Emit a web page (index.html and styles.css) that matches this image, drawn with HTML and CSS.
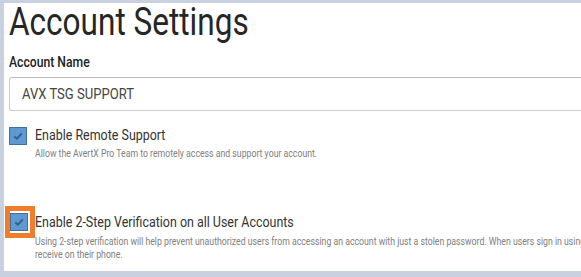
FILE: index.html
```html
<!DOCTYPE html>
<html lang="en">
<head>
    <meta charset="UTF-8">
    <meta name="viewport" content="width=device-width, initial-scale=1.0">
    <title>Account Settings</title>
    <link rel="stylesheet" href="styles.css">
</head>
<body>
    <div class="panel">
        <h1><span class="narrow">Account Settings</span></h1>

        <div class="field">
            <div class="field-label"><span class="narrow wide">Account Name</span></div>
            <div class="text-input"><span class="narrow wide">AVX TSG SUPPORT</span></div>
        </div>

        <div class="option">
            <div class="check-wrap">
                <span class="checkbox">
                    <svg viewBox="0 0 16 16" width="12" height="12"><path d="M3 8.5 L6.5 11.5 L13 4.5" fill="none" stroke="#2d5e8e" stroke-width="2.6"/></svg>
                </span>
            </div>
            <div class="option-text">
                <div class="option-title"><span class="narrow">Enable Remote Support</span></div>
                <div class="option-desc"><span class="narrow">Allow the AvertX Pro Team to remotely access and support your account.</span></div>
            </div>
        </div>

        <div class="option highlighted">
            <div class="check-wrap">
                <span class="checkbox">
                    <svg viewBox="0 0 16 16" width="12" height="12"><path d="M3 8.5 L6.5 11.5 L13 4.5" fill="none" stroke="#2d5e8e" stroke-width="2.6"/></svg>
                </span>
            </div>
            <div class="option-text">
                <div class="option-title"><span class="narrow">Enable 2-Step Verification on all User Accounts</span></div>
                <div class="option-desc"><span class="narrow">Using 2-step verification will help prevent unauthorized users from accessing an account with just a stolen password. When users sign in using a new device, they will need to enter a code they</span></div>
                <div class="option-desc tight"><span class="narrow">receive on their phone.</span></div>
            </div>
        </div>
    </div>
</body>
</html>
```

FILE: styles.css
```css
body {
    margin: 0;
    padding: 3px 0 0 4px;
    font-family: Roboto, 'Liberation Sans', sans-serif;
    background-color: #c9d1e1;
    height: 277px;
    box-sizing: border-box;
    overflow: hidden;
}

.panel {
    background-color: #fff;
    height: 268px;
    padding: 0 0 0 5px;
    overflow: hidden;
    white-space: nowrap;
}

/* the screenshot font is a condensed face, so squeeze Roboto */
.narrow {
    display: inline-block;
    transform: scaleX(0.83);
    transform-origin: left center;
}

.narrow.wide {
    transform: scaleX(0.87);
}

h1 {
    margin: 0;
    font-size: 38px;
    font-weight: 400;
    color: #262626;
    line-height: 40px;
    margin-top: -1px;
    margin-bottom: -1px;
}

.field {
    margin-top: 13px;
}

.field-label {
    font-size: 14px;
    font-weight: 500;
    color: #222;
    line-height: 17px;
    margin-bottom: 6px;
}

.text-input {
    display: flex;
    align-items: center;
    width: 620px;
    height: 34px;
    box-sizing: border-box;
    border: 1px solid #ccc;
    border-top-color: #bbb;
    border-radius: 3px;
    padding: 0 12px;
    font-size: 15px;
    color: #444;
}

.option {
    display: flex;
    margin-top: 15px;
}

.check-wrap {
    flex: none;
    width: 26px;
    padding-top: 1px;
}

.checkbox {
    display: flex;
    align-items: center;
    justify-content: center;
    width: 16px;
    height: 16px;
    background-color: #5f99d0;
    border: 1px solid #3d6f9f;
}

.option-title {
    font-size: 15px;
    color: #333;
    line-height: 18px;
}

.option-desc {
    font-size: 10.5px;
    color: #808080;
    line-height: 13px;
    margin-top: 3px;
}

.option-desc.tight {
    margin-top: 0;
}

.highlighted {
    margin-top: 53px;
    margin-left: -4px;
}

.highlighted .check-wrap {
    width: 30px;
    height: 32px;
    box-sizing: border-box;
    border: 5px solid #f07d2b;
    padding: 0 2px 0 0;
    display: flex;
    align-items: center;
    justify-content: center;
    margin-top: -7px;
}

.highlighted .option-desc {
    margin-top: 4px;
}

.highlighted .option-desc.tight {
    margin-top: 0;
}
```
